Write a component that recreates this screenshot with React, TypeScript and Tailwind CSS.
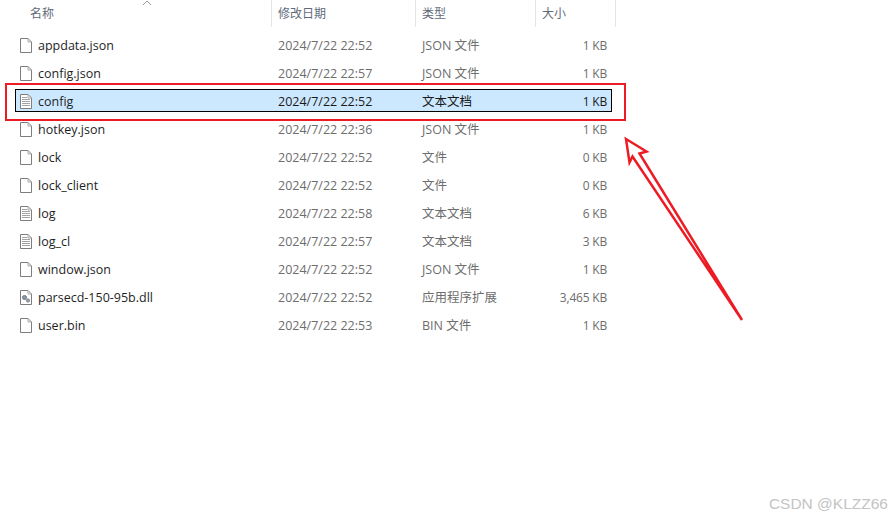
import React from 'react';

type FileRow = {
  name: string;
  date: string;
  type: string;
  size: string;
  icon: 'blank' | 'text' | 'dll';
  selected?: boolean;
};

const FILES: FileRow[] = [
  { name: 'appdata.json', date: '2024/7/22 22:52', type: 'JSON 文件', size: '1 KB', icon: 'blank' },
  { name: 'config.json', date: '2024/7/22 22:57', type: 'JSON 文件', size: '1 KB', icon: 'blank' },
  { name: 'config', date: '2024/7/22 22:52', type: '文本文档', size: '1 KB', icon: 'text', selected: true },
  { name: 'hotkey.json', date: '2024/7/22 22:36', type: 'JSON 文件', size: '1 KB', icon: 'blank' },
  { name: 'lock', date: '2024/7/22 22:52', type: '文件', size: '0 KB', icon: 'blank' },
  { name: 'lock_client', date: '2024/7/22 22:52', type: '文件', size: '0 KB', icon: 'blank' },
  { name: 'log', date: '2024/7/22 22:58', type: '文本文档', size: '6 KB', icon: 'text' },
  { name: 'log_cl', date: '2024/7/22 22:57', type: '文本文档', size: '3 KB', icon: 'text' },
  { name: 'window.json', date: '2024/7/22 22:52', type: 'JSON 文件', size: '1 KB', icon: 'blank' },
  { name: 'parsecd-150-95b.dll', date: '2024/7/22 22:52', type: '应用程序扩展', size: '3,465 KB', icon: 'dll' },
  { name: 'user.bin', date: '2024/7/22 22:53', type: 'BIN 文件', size: '1 KB', icon: 'blank' },
];

const FileIcon: React.FC<{ kind: FileRow['icon'] }> = ({ kind }) => (
  <svg width="14" height="17" viewBox="0 0 14 17" className="mb-[3px] shrink-0">
    <path d="M1.5 1.5H9L12.5 5V15.5H1.5Z" fill="#fff" stroke="#7d7d7d" />
    <path d="M9 1.5V5H12.5" fill="none" stroke="#a8a8a8" />
    {kind === 'text' && (
      <path d="M3 4.5H8M3 6.5H11M3 8.5H11M3 10.5H11M3 12.5H11" fill="none" stroke="#a3a3a3" />
    )}
    {kind === 'dll' && (
      <g>
        <circle cx="5.5" cy="8.5" r="2" fill="#8d97a3" stroke="#6f7883" />
        <circle cx="9" cy="11.5" r="1.6" fill="#9aa3ad" stroke="#78818b" />
      </g>
    )}
  </svg>
);

const HeaderCell: React.FC<{ label: string; className: string }> = ({ label, className }) => (
  <div className={`flex h-full items-center border-r border-[#e5e5e5] ${className}`}>{label}</div>
);

const App: React.FC = () => {
  return (
    <div
      className="relative h-[519px] w-[891px] overflow-hidden bg-white text-[12.5px]"
      style={{ fontFamily: '"Open Sans", "Noto Sans CJK SC", sans-serif' }}
    >
      <div className="flex h-[27px] pl-[15px] text-[12px] text-[#5f6b7a]">
        <HeaderCell label="名称" className="w-[257px] pl-[15px]" />
        <HeaderCell label="修改日期" className="w-[144px] pl-[6px]" />
        <HeaderCell label="类型" className="w-[120px] pl-[6px]" />
        <HeaderCell label="大小" className="w-[80px] pl-[6px]" />
      </div>

      <div className="flex flex-col gap-[5px] pl-[15px] pt-[6px]">
        {FILES.map(file => (
          <div
            key={file.name}
            className={`flex h-[23px] w-[597px] items-center border pt-[4px] ${
              file.selected ? 'border-black bg-[#cce8ff] text-[#1a1a1a]' : 'border-transparent text-[#6d6d6d]'
            }`}
          >
            <div className="flex w-[256px] items-center gap-[5px] pl-[3px]">
              <FileIcon kind={file.icon} />
              <span className="text-[#1f1f1f]">{file.name}</span>
            </div>
            <div className="w-[144px] pl-[6px]">{file.date}</div>
            <div className="w-[120px] pl-[6px]">{file.type}</div>
            <div className="mb-[2px] w-[71px] text-right text-[12px] tracking-[-0.2px]">{file.size}</div>
          </div>
        ))}
      </div>

      {/* sort chevron */}
      <svg width="10" height="6" viewBox="0 0 10 6" className="absolute left-[142px] top-0">
        <path d="M1 5L5 1L9 5" fill="none" stroke="#9a9a9a" />
      </svg>

      {/* red annotation box */}
      <div className="absolute left-[5px] top-[83px] h-[38px] w-[621px] border-2 border-[#ed1c24]" />

      {/* red annotation arrow */}
      <svg width="891" height="519" viewBox="0 0 891 519" className="pointer-events-none absolute left-0 top-0">
        <path
          d="M626 139L646.5 151.5L639.5 153.5L742 320L632.5 156.5L629.5 162.5Z"
          fill="none"
          stroke="#ed1c24"
          strokeWidth="2.5"
          strokeLinejoin="miter"
        />
      </svg>

      {/* watermark */}
      <div
        className="absolute bottom-[6px] right-[3px] text-[15.5px] leading-[18px] text-[#c4c4c4]"
        style={{ fontFamily: '"Liberation Sans", sans-serif' }}
      >
        CSDN @KLZZ66
      </div>
    </div>
  );
};

export default App;
